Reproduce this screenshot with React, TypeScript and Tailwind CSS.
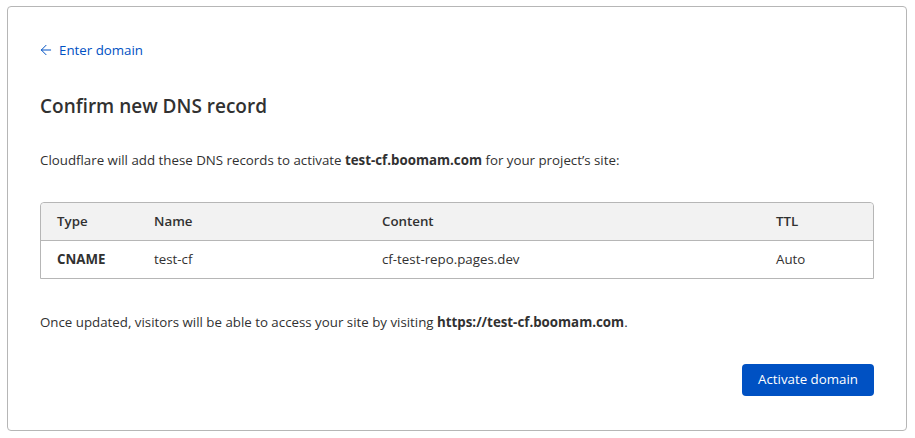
import { ArrowLeft } from 'lucide-react';

const rows = [{ type: 'CNAME', name: 'test-cf', content: 'cf-test-repo.pages.dev', ttl: 'Auto' }];

export default function App() {
  return (
    <div className="min-h-screen bg-white pt-[6px] pl-[7px] text-[#313131]" style={{ fontFamily: '"Open Sans", "Noto Sans", sans-serif' }}>
      <div className="w-[900px] h-[425px] border border-[#b6b6b6] rounded-[4px] px-[32px] pt-[33px] flex flex-col">
        {/* Back link */}
        <a href="#" className="flex items-center gap-[5px] text-[#0051c3] text-[13.3px] leading-[20px] h-[20px]">
          <ArrowLeft className="w-[16px] h-[16px] -ml-[2px]" strokeWidth={1.5} />
          Enter domain
        </a>

        <h1 className="mt-[32px] text-[19px] leading-[28px] font-semibold text-[#313131]">Confirm new DNS record</h1>

        <p className="mt-[30px] text-[13.3px] leading-[20px]">
          Cloudflare will add these DNS records to activate <strong className="font-bold">test-cf.boomam.com</strong> for your project’s site:
        </p>

        {/* Records table */}
        <div className="mt-[32px] border border-[#b6b6b6] rounded-t-[4px] text-[13.3px]">
          <div className="grid grid-cols-[97px_228px_394px_1fr] h-[38px] items-center bg-[#f2f2f2] border-b border-[#b6b6b6] font-semibold rounded-t-[4px]">
            <div className="px-4">Type</div>
            <div className="px-4">Name</div>
            <div className="px-4">Content</div>
            <div className="px-4">TTL</div>
          </div>
          {rows.map((r) => (
            <div key={r.name} className="grid grid-cols-[97px_228px_394px_1fr] h-[37px] items-center">
              <div className="px-4 font-bold">{r.type}</div>
              <div className="px-4">{r.name}</div>
              <div className="px-4">{r.content}</div>
              <div className="px-4">{r.ttl}</div>
            </div>
          ))}
        </div>

        <p className="mt-[33px] text-[13.3px] leading-[20px]">
          Once updated, visitors will be able to access your site by visiting <strong className="font-bold">https://test-cf.boomam.com</strong>.
        </p>

        <div className="mt-[32px] flex justify-end">
          <button className="h-[32px] w-[132px] rounded-[4px] bg-[#0051c3] text-white text-[13.3px]">Activate domain</button>
        </div>
      </div>
    </div>
  );
}
